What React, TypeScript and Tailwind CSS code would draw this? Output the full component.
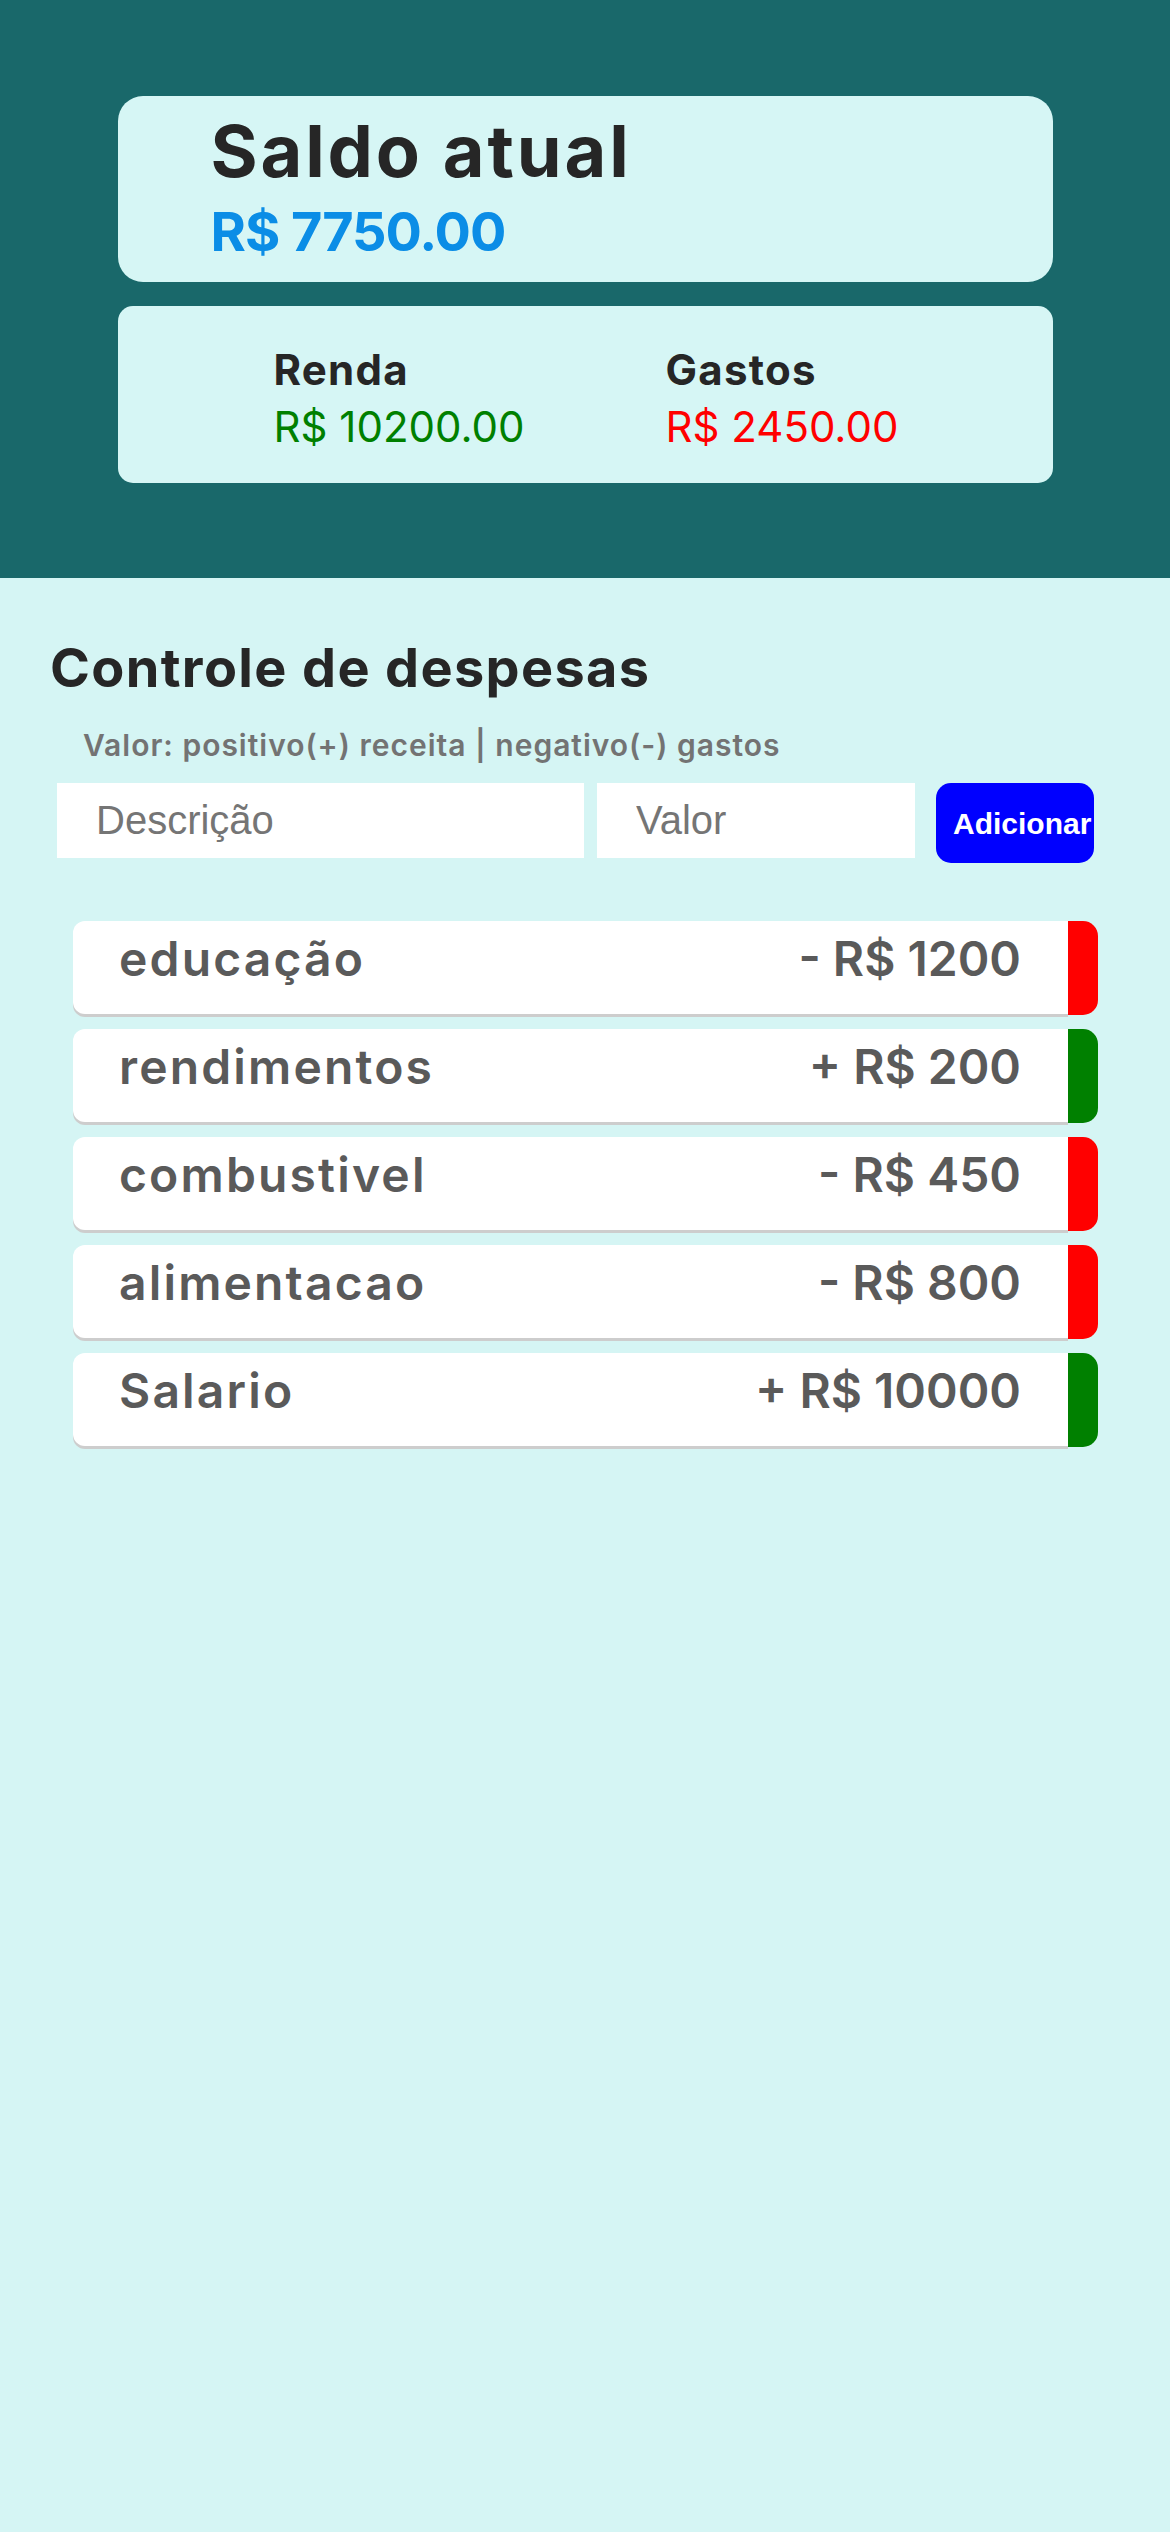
import React from 'react';

const transacoes = [
  { id: 1, descricao: 'educação', valor: -1200 },
  { id: 2, descricao: 'rendimentos', valor: 200 },
  { id: 3, descricao: 'combustivel', valor: -450 },
  { id: 4, descricao: 'alimentacao', valor: -800 },
  { id: 5, descricao: 'Salario', valor: 10000 },
];

const font = { fontFamily: 'Inter, "Open Sans", sans-serif' };
const arial = { fontFamily: '"Liberation Sans", Arial, sans-serif' };

function Resumo() {
  const renda = transacoes.filter((t) => t.valor > 0).reduce((a, t) => a + t.valor, 0);
  const gastos = transacoes.filter((t) => t.valor < 0).reduce((a, t) => a - t.valor, 0);
  const saldo = renda - gastos;

  return (
    <header className="h-[578px] bg-[#19686a] pt-[96px] flex flex-col items-center">
      <div className="w-[935px] h-[186px] rounded-[25px] bg-[#d6f6f5] pl-[93px] pt-[15px]">
        <h1 className="text-[72px] leading-[80px] font-bold tracking-[0.04em] text-[#262626]">Saldo atual</h1>
        <p className="mt-[11px] text-[54px] leading-[60px] font-bold tracking-[-0.02em] text-[#0b8de6]">
          R$ {saldo.toFixed(2)}
        </p>
      </div>

      <div className="mt-[24px] w-[935px] h-[177px] rounded-[15px] bg-[#d6f6f5] pl-[156px] pt-[39px] flex">
        <div className="w-[392px]">
          <h3 className="text-[42px] leading-[50px] font-bold tracking-[0.03em] text-[#262626]">Renda</h3>
          <p className="mt-[7px] text-[42px] leading-[50px] text-[#008000]">R$ {renda.toFixed(2)}</p>
        </div>
        <div>
          <h3 className="text-[42px] leading-[50px] font-bold tracking-[0.03em] text-[#262626]">Gastos</h3>
          <p className="mt-[7px] text-[42px] leading-[50px] text-[#ff0000]">R$ {gastos.toFixed(2)}</p>
        </div>
      </div>
    </header>
  );
}

function Formulario() {
  return (
    <div className="pl-[57px] flex items-start">
      <input
        type="text"
        placeholder="Descrição"
        className="w-[527px] h-[75px] bg-white pl-[39px] text-[40px] placeholder:text-[#757575] outline-none"
        style={arial}
      />
      <input
        type="number"
        placeholder="Valor"
        className="ml-[13px] w-[318px] h-[75px] bg-white pl-[39px] text-[40px] placeholder:text-[#757575] outline-none"
        style={arial}
      />
      <button
        className="ml-[21px] w-[158px] h-[80px] rounded-[15px] bg-[#0000ff] text-white text-[30px] font-bold pl-[17px] text-left whitespace-nowrap"
        style={arial}
      >
        Adicionar
      </button>
    </div>
  );
}

function Lista() {
  return (
    <ul className="mt-[58px] ml-[73px] w-[1025px] flex flex-col gap-[15px]">
      {transacoes.map((t) => (
        <li key={t.id} className="flex h-[93px]">
          <div className="flex-1 h-[93px] bg-white rounded-l-[12px] shadow-[0_3px_0_#cdcdcd] pl-[46px] pr-[47px] pt-[10px] flex justify-between text-[48px] leading-[56px] font-semibold tracking-[0.045em] text-[#5a5a5a]">
            <span>{t.descricao}</span>
            <span className="tracking-normal">
              {t.valor < 0 ? '-' : '+'} R$ {Math.abs(t.valor)}
            </span>
          </div>
          <div
            className={
              t.valor < 0
                ? 'w-[30px] h-[94px] rounded-r-[15px] bg-[#ff0000]'
                : 'w-[30px] h-[94px] rounded-r-[15px] bg-[#008000]'
            }
          />
        </li>
      ))}
    </ul>
  );
}

export default function App() {
  return (
    <div className="min-h-[2532px] bg-[#d5f5f4]" style={font}>
      <Resumo />
      <section className="pt-[58px]">
        <h2 className="pl-[50px] text-[54px] leading-[64px] font-bold tracking-[0.025em] text-[#262626]">
          Controle de despesas
        </h2>
        <p className="mt-[27px] pl-[83px] text-[30px] leading-[36px] font-semibold tracking-[0.033em] text-[#737373]">
          Valor: positivo(+) receita | negativo(-) gastos
        </p>
        <div className="mt-[20px]">
          <Formulario />
        </div>
        <Lista />
      </section>
    </div>
  );
}
